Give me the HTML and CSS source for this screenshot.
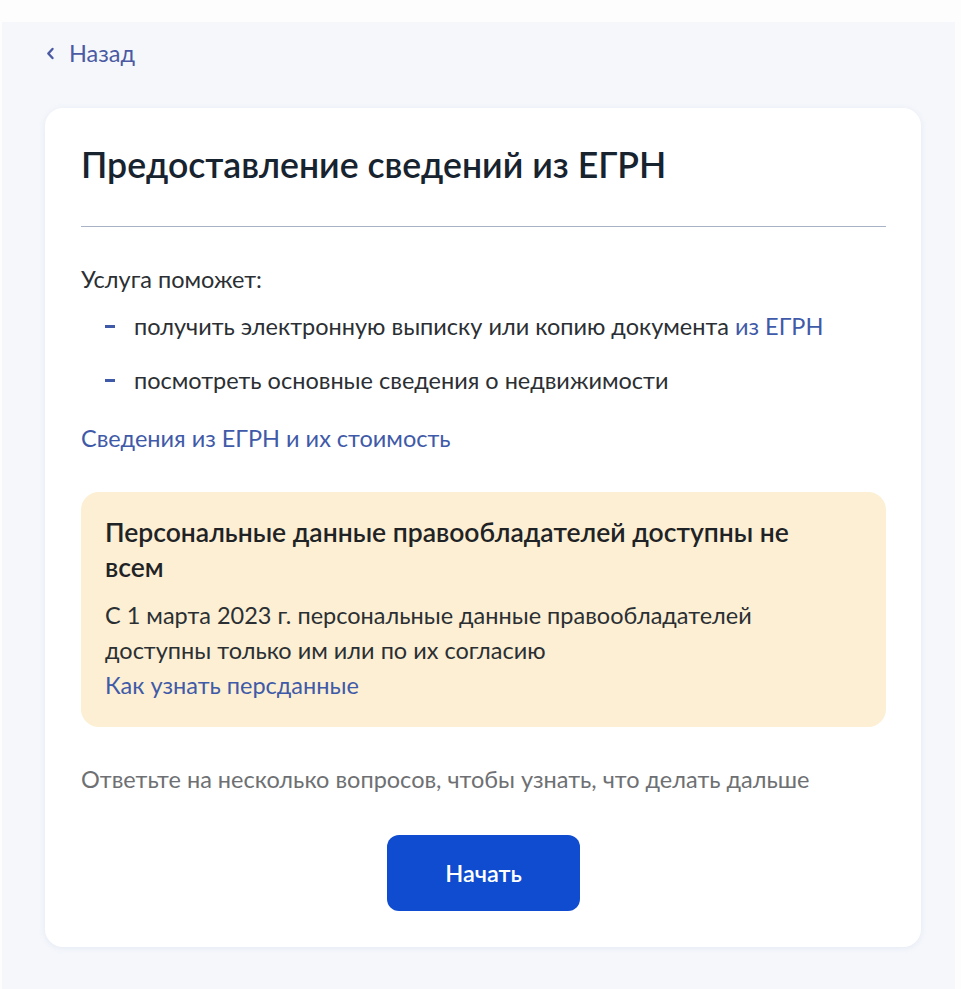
FILE: index.html
```html
<!DOCTYPE html>
<html lang="ru">
<head>
<meta charset="utf-8">
<title>Предоставление сведений из ЕГРН</title>
<link rel="stylesheet" href="styles.css">
</head>
<body>
<div class="page">
  <a class="back" href="#">
    <svg class="back-icon" width="9" height="13" viewBox="0 0 9 13"><path d="M6.5 2 L2.3 6.5 L6.5 11" fill="none" stroke="currentColor" stroke-width="2.4" stroke-linecap="round" stroke-linejoin="round"/></svg>
    <span>Назад</span>
  </a>
  <main class="card">
    <h1 class="title">Предоставление сведений из ЕГРН</h1>
    <hr class="divider">
    <p class="lead">Услуга поможет:</p>
    <ul class="list">
      <li><span class="dash"></span><span>получить электронную выписку или копию документа <a href="#" class="link">из ЕГРН</a></span></li>
      <li><span class="dash"></span><span>посмотреть основные сведения о недвижимости</span></li>
    </ul>
    <a href="#" class="link cost">Сведения из ЕГРН и их стоимость</a>
    <section class="notice">
      <h2 class="notice-title">Персональные данные правообладателей доступны не всем</h2>
      <p class="notice-text">С 1 марта 2023 г. персональные данные правообладателей доступны только им или по их согласию</p>
      <a href="#" class="link notice-link">Как узнать персданные</a>
    </section>
    <p class="hint">Ответьте на несколько вопросов, чтобы узнать, что делать дальше</p>
    <div class="actions">
      <button class="btn" type="button">Начать</button>
    </div>
  </main>
</div>
</body>
</html>
```
FILE: styles.css
```css
* { box-sizing: border-box; }
html, body { margin: 0; padding: 0; }
body {
  background: #fdfdfe;
  font-family: Lato, "Noto Sans", sans-serif;
  color: #2b2f33;
  font-size: 23.5px;
  line-height: 35px;
}
.page {
  margin: 22px 6px 0 2px;
  background: #f5f7fb;
  min-height: 967px;
  padding: 12px 34px 41px 43px;
}
.back {
  display: inline-flex;
  align-items: center;
  gap: 14px;
  color: #4b5aa3;
  text-decoration: none;
  line-height: 35px;
  margin-left: 1px;
}
.back-icon { display: block; }
.card {
  margin-top: 37px;
  background: #fff;
  border-radius: 18px;
  box-shadow: 0 1px 6px rgba(150, 165, 200, 0.16);
  padding: 33px 35px 36px 36px;
}
.title {
  margin: 0;
  font-size: 35.6px;
  line-height: 47px;
  font-weight: 600;
  color: #17232f;
}
.divider {
  margin: 38px 0 0;
  border: 0;
  border-top: 1.5px solid #a9b3c8;
}
.lead {
  margin: 35px 0 0;
}
.list {
  list-style: none;
  margin: 12px 0 0;
  padding: 0 0 0 24px;
  display: flex;
  flex-direction: column;
  gap: 19px;
}
.list li { display: flex; align-items: center; gap: 19px; }
.dash {
  width: 10px;
  height: 3px;
  background: #3f5aa8;
  flex: none;
}
.link { color: #3f5aa8; text-decoration: none; }
.cost {
  display: block;
  margin-top: 23px;
}
.notice {
  margin-top: 35.5px;
  background: #fcefd3;
  border-radius: 18px;
  padding: 23.5px 40px 23.5px 24px;
}
.notice-title {
  margin: 0;
  font-size: 26.5px;
  line-height: 35px;
  font-weight: 600;
  color: #1f2326;
}
.notice-text {
  margin: 13px 0 0;
  color: #2b2f33;
}
.notice-link {
  display: block;
}
.hint {
  margin: 35.5px 0 0;
  color: #6e7073;
}
.actions {
  display: flex;
  justify-content: center;
  margin-top: 37.5px;
}
.btn {
  width: 193px;
  height: 76px;
  border: 0;
  border-radius: 12px;
  background: #0f4ccf;
  color: #fff;
  font-family: Lato, "Noto Sans", sans-serif;
  font-size: 23.5px;
  font-weight: 600;
}
```
